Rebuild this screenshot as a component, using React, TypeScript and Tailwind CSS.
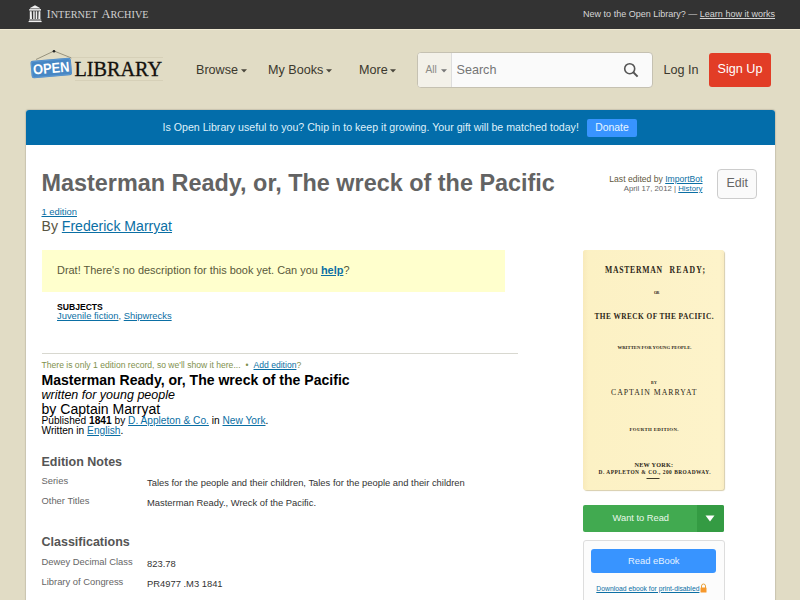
import React from 'react';

const SERIF = '"Liberation Serif", "Times New Roman", serif';
const SANS = '"Liberation Sans", Arial, sans-serif';

function A({ children, className = '' }: { children: React.ReactNode; className?: string }) {
  return (
    <a href="#" className={`text-[#0b6fa4] underline ${className}`}>
      {children}
    </a>
  );
}

function Caret({ className = 'text-[#4a473c]' }: { className?: string }) {
  return (
    <svg width="6" height="4" viewBox="0 0 6 4" className={`mt-[2px] ${className}`}>
      <path d="M0 0.300h6L3 3.500z" fill="currentColor" />
    </svg>
  );
}

function ArchiveLogo() {
  return (
    <svg width="124" height="20" viewBox="0 0 124 20">
      <g fill="#f0f0f0">
        <path d="M2 3.9L7 1.2L12 3.9V4.6H2z" />
        <rect x="1.2" y="5.1" width="11.8" height="1.5" />
        <path d="M1.8 7.2h1.9l.3 7.8H1.8zM5.2 7.2h1.5v7.8H5.2zM7.7 7.2h1.5v7.8H7.7zM10.6 7.2h1.8v7.8h-2.1z" />
        <rect x="1" y="15.5" width="12.2" height="1" />
        <rect x="0.6" y="17" width="13" height="1.1" />
      </g>
      <g fill="#d2d2d2" fontFamily={SERIF}>
        <text x="18.5" y="14" fontSize="12" textLength="51" lengthAdjust="spacingAndGlyphs">
          I<tspan fontSize="9.8">NTERNET</tspan>
        </text>
        <text x="73.5" y="14" fontSize="12" textLength="47" lengthAdjust="spacingAndGlyphs">
          A<tspan fontSize="9.8">RCHIVE</tspan>
        </text>
      </g>
    </svg>
  );
}

function LibraryLogo() {
  return (
    <svg width="136" height="34" viewBox="0 0 136 34" className="overflow-visible">
      <path d="M6 10.5L24 2L41.500 9" fill="none" stroke="#77725f" strokeWidth="0.7" />
      <circle cx="24" cy="2.200" r="1.300" fill="#222" />
      <path d="M42 8.500H133M45 31.500H133" stroke="#cfc8ae" strokeWidth="0.6" />
      <g transform="rotate(-5 21 19)">
        <rect x="1" y="10.300" width="40.500" height="17.500" rx="2.500" fill="#4787c4" />
        <rect x="1.800" y="11.100" width="38.900" height="15.900" rx="2" fill="none" stroke="#6ba2d6" strokeWidth="0.6" />
        <text x="3" y="24" fontSize="14.200" fontWeight="bold" fill="#fff" fontFamily={SANS} textLength="36.500" lengthAdjust="spacingAndGlyphs">
          OPEN
        </text>
      </g>
      <text x="44.500" y="27" fontSize="22" fill="#14120e" stroke="#14120e" strokeWidth="0.350" fontFamily={SERIF} textLength="87.500" lengthAdjust="spacingAndGlyphs">
        LIBRARY
      </text>
    </svg>
  );
}

type CoverLine = { text: string; x: number; y: number; w: number; size: number; stretch: number; weight: number };

// stretch scales the glyphs horizontally; the remaining width goes to letter spacing
const coverLines: CoverLine[] = [
  { text: 'MASTERMAN', x: 22, y: 22.5, w: 57, size: 11, stretch: 0.7, weight: 700 },
  { text: 'READY;', x: 86.5, y: 22.5, w: 35.5, size: 11, stretch: 0.7, weight: 700 },
  { text: 'OR', x: 71, y: 44.3, w: 5.5, size: 4.2, stretch: 0.95, weight: 700 },
  { text: 'THE WRECK OF THE PACIFIC.', x: 11.5, y: 69.4, w: 119, size: 7.2, stretch: 1.02, weight: 700 },
  { text: 'WRITTEN FOR YOUNG PEOPLE.', x: 34.5, y: 98.8, w: 74, size: 4.6, stretch: 1.02, weight: 700 },
  { text: 'BY', x: 68, y: 133.5, w: 6, size: 4.2, stretch: 0.95, weight: 700 },
  { text: 'CAPTAIN MARRYAT', x: 28, y: 145.2, w: 85.5, size: 7.2, stretch: 1.08, weight: 400 },
  { text: 'FOURTH EDITION.', x: 46.5, y: 180.6, w: 49, size: 4.6, stretch: 1.05, weight: 700 },
  { text: 'NEW YORK:', x: 51.5, y: 217, w: 38.5, size: 6.2, stretch: 1, weight: 700 },
  { text: 'D. APPLETON & CO., 200 BROADWAY.', x: 15.5, y: 224.4, w: 112, size: 5.4, stretch: 1, weight: 700 },
];

function Cover() {
  return (
    <svg width="141" height="240" viewBox="0 0 141 240" className="block rounded-[3px] bg-[#fcf1c4] shadow-[1px_1px_1px_#d8ceac]">
      <defs>
        <linearGradient id="paper" x1="0" x2="1" y1="0" y2="0">
          <stop offset="0" stopColor="#f8eabb" />
          <stop offset="0.04" stopColor="#fcf1c4" />
          <stop offset="0.97" stopColor="#fdf3ca" />
          <stop offset="1" stopColor="#f9ecc2" />
        </linearGradient>
      </defs>
      <rect width="141" height="240" fill="url(#paper)" />
      {coverLines.map((l) => (
        <text
          key={l.text}
          transform={`translate(${l.x} ${l.y}) scale(${l.stretch} 1)`}
          fontSize={l.size}
          fontWeight={l.weight}
          textLength={l.w / l.stretch}
          lengthAdjust="spacing"
          fontFamily={SERIF}
          fill="#2c2617"
        >
          {l.text}
        </text>
      ))}
      <path d="M63.500 228.500H76.500" stroke="#2c2617" strokeWidth="0.900" />
    </svg>
  );
}

function Row({ label, value }: { label: string; value: string }) {
  return (
    <div className="flex h-[20.300px] text-[9.400px] leading-[12px]">
      <div className="w-[105.500px] pt-[0.500px] text-[#666]">{label}</div>
      <div className="pt-[2.500px] text-[#333]">{value}</div>
    </div>
  );
}

export default function App() {
  return (
    <div className="h-[600px] w-[800px] overflow-hidden whitespace-nowrap bg-[#e1dcc5] font-['Liberation_Sans',Arial,sans-serif]">
      <header className="flex h-[30px] items-start justify-between border-b border-[#efe9d3] bg-[#333] pl-[28px] pr-[25px]">
        <div className="pt-[4px]"><ArchiveLogo /></div>
        <div className="text-[9.020px] leading-[29px] text-[#d6d6d6]">
          New to the Open Library? — <a href="#" className="underline">Learn how it works</a>
        </div>
      </header>

      <nav className="flex h-[80px] items-center pl-[30px] text-[12.600px] text-[#3b382d]">
        <div className="w-[166px] pb-[9px]"><LibraryLogo /></div>
        <div className="flex w-[72px] items-center gap-[2.500px]">Browse <Caret /></div>
        <div className="flex w-[91px] items-center gap-[2.500px]">My Books <Caret /></div>
        <div className="flex w-[58px] items-center gap-[2.500px]">More <Caret /></div>
        <div className="flex h-[36px] w-[236px] items-center overflow-hidden rounded-[4px] border border-[#c5c1b2] bg-[#fafafa]">
          <div className="flex h-full w-[34px] items-center gap-[4px] border-r border-[#ddd] bg-[#f3f1e9] pl-[7.500px] text-[10.200px] text-[#8a8a86]">
            All <Caret className="text-[#777]" />
          </div>
          <div className="flex-1 pl-[4.500px] text-[#757575]">Search</div>
          <svg width="16" height="16" viewBox="0 0 16 16" className="mr-[13px] text-[#555]" fill="none" stroke="currentColor">
            <circle cx="6.700" cy="6.700" r="5" strokeWidth="1.600" />
            <path d="M10.300 10.300L14.600 14.600" strokeWidth="2" />
          </svg>
        </div>
        <div className="w-[56px] pl-[10.500px]">Log In</div>
        <button className="h-[34px] w-[62px] rounded-[3px] bg-[#e23d26] pb-[2px] text-white">Sign Up</button>
      </nav>

      <main className="ml-[25.500px] h-[490px] w-[749px] overflow-hidden rounded-t-[3px] bg-white shadow-[0_0_1px_1px_#c9c4b0]">
        <div className="flex h-[35px] items-center bg-[#036daa] pl-[137px] text-[10.640px] text-[#dff0fa]">
          <span className="w-[424.500px]">
            Is Open Library useful to you? Chip in to keep it growing. Your gift will be matched today!
          </span>
          <button className="h-[18px] w-[50px] rounded-[2px] bg-[#3894ff] text-[10.400px] leading-[17px] text-[#e8f4ff]">Donate</button>
        </div>

        <div className="flex pl-[16px]">
          <section className="w-[541.300px]">
            <h1 className="mt-[24px] h-[28px] text-[23.420px] font-bold leading-[29px] text-[#636363]">
              Masterman Ready, or, The wreck of the Pacific
            </h1>
            <div className="mt-[8px] h-[13px] text-[9.400px] leading-[13px]"><A>1 edition</A></div>
            <div className="h-[18px] text-[14.070px] leading-[17px] text-[#5a5543]">By <A>Frederick Marryat</A></div>

            <div className="mt-[14px] h-[42px] w-[463.500px] bg-[#ffffcd] pl-[15.500px] text-[10.950px] leading-[41px] text-[#59593a]">
              Drat! There's no description for this book yet. Can you <A className="font-bold">help</A>?
            </div>

            <div className="mt-[9.500px] pl-[15.500px]">
              <div className="h-[9.500px] text-[8.600px] font-bold leading-[11px] text-black">SUBJECTS</div>
              <div className="h-[11px] text-[9.400px] leading-[10px] text-[#555]">
                <A>Juvenile fiction</A>, <A>Shipwrecks</A>
              </div>
            </div>

            <div className="mt-[31px] w-[476px] border-t border-[#d8d8d0] pt-[6px]">
              <div className="flex h-[12px] text-[8.580px] leading-[11px] text-[#7f914e]">
                <span className="w-[204px]">There is only 1 edition record, so we'll show it here...</span>
                <span className="w-[8px]">•</span>
                <span><A>Add edition</A>?</span>
              </div>
              <h2 className="h-[16px] text-[14.050px] font-bold leading-[17px] text-black">
                Masterman Ready, or, The wreck of the Pacific
              </h2>
              <div className="h-[14px] text-[12.500px] italic leading-[14px] text-black">written for young people</div>
              <div className="h-[13.500px] text-[14.050px] leading-[14px] text-black">by Captain Marryat</div>
              <div className="text-[10.180px] leading-[10.300px] text-black">
                <div>Published <b>1841</b> by <A>D. Appleton &amp; Co.</A> in <A>New York</A>.</div>
                <div>Written in <A>English</A>.</div>
              </div>
            </div>

            <h3 className="mt-[17.500px] h-[21px] text-[12.500px] font-bold leading-[16px] text-[#555]">Edition Notes</h3>
            <Row label="Series" value="Tales for the people and their children, Tales for the people and their children" />
            <Row label="Other Titles" value="Masterman Ready., Wreck of the Pacific." />
            <h3 className="mt-[18.500px] h-[21.500px] text-[12.500px] font-bold leading-[16px] text-[#555]">Classifications</h3>
            <Row label="Dewey Decimal Class" value="823.78" />
            <Row label="Library of Congress" value="PR4977 .M3 1841" />
          </section>

          <aside className="w-[174.200px]">
            <div className="flex h-[105px] items-start justify-end pt-[24px]">
              <div className="pt-[6px] text-right text-[#666]">
                <div className="text-[8.600px] leading-[9px] text-[#5f5940]">Last edited by <A>ImportBot</A></div>
                <div className="text-[7.800px] leading-[9px]">April 17, 2012 | <A>History</A></div>
              </div>
              <button className="ml-[15px] h-[30px] w-[39.500px] rounded-[4px] border border-[#ccc] bg-[#fafafa] pb-[2px] text-[12.500px] text-[#666]">Edit</button>
            </div>
            <div className="w-[141px]">
              <Cover />
              <div className="mt-[15px] flex h-[27px] items-center overflow-hidden rounded-[2px] bg-[#41aa50] text-[9.300px] text-[#e9f8eb]">
                <span className="flex-1 pl-[2px] pt-px text-center">Want to Read</span>
                <span className="flex h-full w-[27px] items-center justify-center bg-[#349b43]">
                  <svg width="10" height="7" viewBox="0 0 10 7"><path d="M0.500 0.500h9L5 6.500z" fill="#fff" /></svg>
                </span>
              </div>
              <div className="mt-[8px] h-[70px] w-[142px] rounded-[3px] border border-[#ddd] bg-[#fcfcfc] px-[7.500px] pt-[8px]">
                <button className="block h-[24px] w-[125px] rounded-[3px] bg-[#3894ff] text-[9.350px] leading-[23px] text-[#e4f1ff]">Read eBook</button>
                <div className="flex h-[25px] items-center pl-[5px] pt-[6px] text-[6.800px] leading-[10px]">
                  <A>Download ebook for print-disabled</A>
                  <svg width="7" height="10" viewBox="0 0 7 10" className="-mt-[2px] ml-[1px] shrink-0">
                    <path d="M1.500 5V3a2 2 0 0 1 4 0v2" fill="none" stroke="#e9a23a" strokeWidth="1" />
                    <rect x="0.500" y="4.500" width="6" height="5" rx="0.500" fill="#f6982c" />
                  </svg>
                </div>
              </div>
            </div>
          </aside>
        </div>
      </main>
    </div>
  );
}
